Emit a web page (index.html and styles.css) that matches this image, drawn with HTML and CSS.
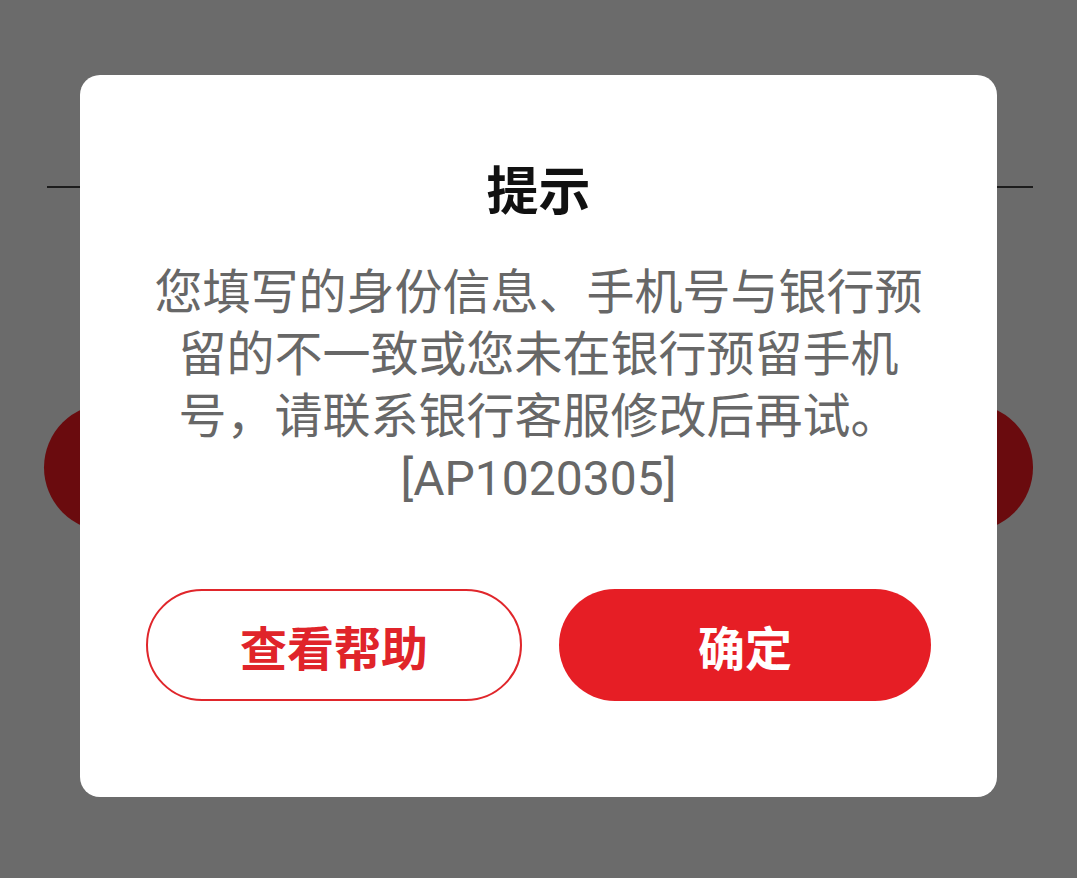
FILE: index.html
```html
<!DOCTYPE html>
<html lang="zh-CN">
<head>
<meta charset="utf-8">
<title>提示</title>
<link rel="stylesheet" href="styles.css">
</head>
<body>
<div class="page">
  <div class="rule"></div>
  <div class="bg-button"></div>
</div>
<div class="overlay">
  <div class="dialog">
    <h1 class="title">提示</h1>
    <p class="message">您填写的身份信息、手机号与银行预留的不一致或您未在银行预留手机号，请联系银行客服修改后再试。<br>[AP1020305]</p>
    <div class="actions">
      <button class="btn btn-outline">查看帮助</button>
      <button class="btn btn-fill">确定</button>
    </div>
  </div>
</div>
</body>
</html>
```

FILE: styles.css
```css
html, body {
  margin: 0;
  padding: 0;
  height: 100%;
}
body {
  background: #6b6b6b;
  font-family: Roboto, "Noto Sans CJK SC", sans-serif;
  overflow: hidden;
}
.page {
  padding: 186px 44px 0 44px;
}
.rule {
  height: 2px;
  background: #1c1c1c;
  margin-left: 3px;
}
.bg-button {
  margin-top: 216px;
  height: 127px;
  border-radius: 64px;
  background: #6a0b0e;
}
.overlay {
  position: fixed;
  inset: 0;
  display: flex;
  align-items: center;
  justify-content: center;
  padding-bottom: 6px;
}
.dialog {
  width: 917px;
  box-sizing: border-box;
  background: #ffffff;
  border-radius: 20px;
  padding: 83px 66px 96px 66px;
  display: flex;
  flex-direction: column;
  align-items: center;
}
.title {
  margin: 0;
  font-family: "Noto Sans CJK SC", sans-serif;
  font-size: 52px;
  line-height: 60px;
  font-weight: 700;
  color: #111111;
}
.message {
  margin: 44px 0 0 0;
  width: 790px;
  text-align: center;
  font-size: 48px;
  line-height: 62px;
  color: #676767;
  font-weight: 400;
}
.actions {
  margin-top: 79px;
  display: flex;
  gap: 37px;
  width: 100%;
}
.btn {
  flex: 1;
  height: 112px;
  border-radius: 56px;
  font-family: "Noto Sans CJK SC", sans-serif;
  font-size: 47px;
  font-weight: 700;
  padding: 0;
  box-sizing: border-box;
  cursor: pointer;
}
.btn-outline {
  background: #ffffff;
  border: 2px solid #e0262b;
  color: #e0242a;
}
.btn-fill {
  background: #e61e25;
  border: none;
  color: #ffffff;
}
```
